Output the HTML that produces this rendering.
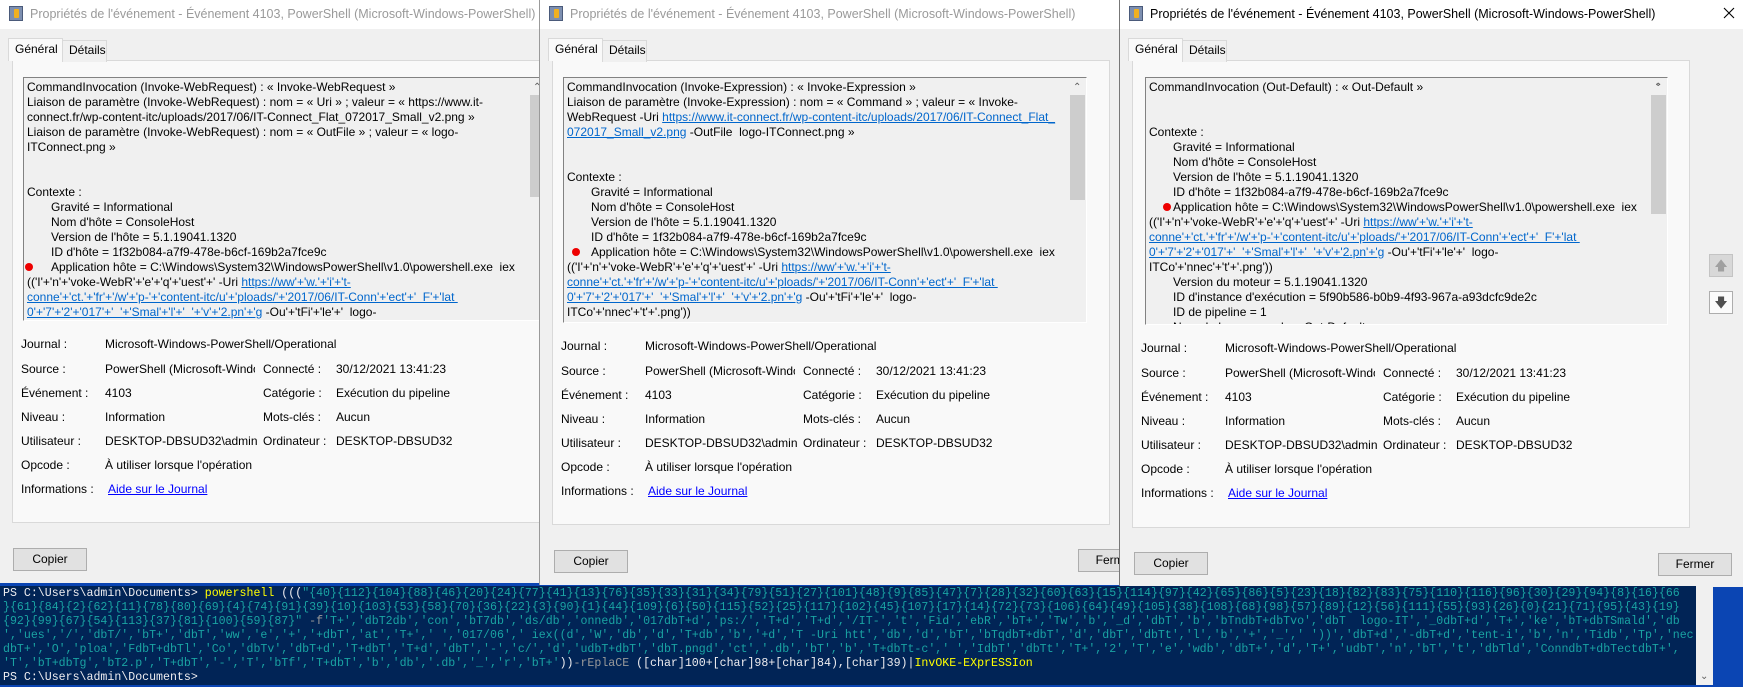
<!DOCTYPE html>
<html><head><meta charset="utf-8">
<style>
*{margin:0;padding:0;box-sizing:border-box}
body{width:1743px;height:687px;overflow:hidden;background:#0b45b3;font-family:"Liberation Sans",sans-serif;font-size:12px;color:#000;position:relative}
.win{position:absolute;top:0;width:624px;background:#f0f0f0;overflow:hidden;border-left:1px solid #9a9a9a}
.tb{position:absolute;left:0;top:0;right:0;height:29px;background:#fff}
.ic{position:absolute;left:9px;top:6px;width:14px;height:15px;background:#7d8fb0;border:1px solid #4a5a7a}
.ic:after{content:"";position:absolute;left:4px;top:2px;width:5px;height:9px;background:#f0b020;border-radius:1px}
.tt{position:absolute;left:30px;top:7px;font-size:12.5px;white-space:nowrap}
.inact .tt{color:#9a9a9a}
.cx{position:absolute;left:603px;top:7px}
.tab{position:absolute;height:22px;border:1px solid #d9d9d9;border-bottom:none;padding:3px 6px;white-space:nowrap}
.t1{left:8px;top:38px;width:55px;background:#f9f9f9;height:23px;z-index:2}
.t2{left:62px;top:40px;width:45px;background:#f0f0f0;padding-top:2px}
.panel{position:absolute;left:12px;top:60px;width:558px;background:#f9f9f9;border:1px solid #d9d9d9}
.box{position:absolute;left:23px;top:77px;width:524px;border:1px solid;border-color:#828282 #fff #fff #828282;background:#f0f0f0;overflow:hidden;padding-top:2px}
.box div{height:15px;line-height:15px;white-space:pre;padding-left:3px}
.box .in{padding-left:27px}
.lk{color:#0066cc;text-decoration:underline}
.dot{position:absolute;width:8px;height:8px;border-radius:50%;background:#e00}
.sb{position:absolute;right:0;top:0;bottom:0;width:17px;background:#f0f0f0}
.sb .th{position:absolute;left:1px;right:1px;top:17px;height:102px;background:#cdcdcd}
.sb .u{position:absolute;top:2px;left:4px;font-size:10px;color:#606060}
.sb .d{position:absolute;bottom:2px;left:4px;font-size:10px;color:#606060}
.f{position:absolute;white-space:nowrap;line-height:14px}
.btn{position:absolute;width:74px;height:23px;background:#e1e1e1;border:1px solid #adadad;text-align:center;line-height:21px}
.ab{position:absolute;left:589px;width:24px;height:23px;border:1px solid #c4c4c4;text-align:center;line-height:21px;font-size:13px}
#con{position:absolute;left:0;top:586px;width:1696px;height:99px;background:#012456;overflow:hidden;font-family:"Liberation Mono",monospace;font-size:11.6px;color:#eeedf0}
#con div{position:absolute;left:3px;white-space:pre;height:14px;line-height:14px}
.y{color:#ffff00}.s{color:#1aa3a3}.g{color:#9a9a9a}
#csb{position:absolute;left:1696px;top:586px;width:17px;height:99px;background:#f0f0f0}
</style></head><body>

<!-- Window 1 -->
<div class="win inact" style="left:0;height:583px;border-left:none">
<div class="tb"><div class="ic"></div><div class="tt">Propriétés de l'événement - Événement 4103, PowerShell (Microsoft-Windows-PowerShell)</div></div>
<div class="panel" style="height:463px"></div>
<div class="tab t1">Général</div><div class="tab t2">Détails</div>
<div class="box" style="height:244px">
<div>CommandInvocation (Invoke-WebRequest) : « Invoke-WebRequest »</div>
<div>Liaison de paramètre (Invoke-WebRequest) : nom = « Uri » ; valeur = « https://www.it-</div>
<div>connect.fr/wp-content-itc/uploads/2017/06/IT-Connect_Flat_072017_Small_v2.png »</div>
<div>Liaison de paramètre (Invoke-WebRequest) : nom = « OutFile » ; valeur = « logo-</div>
<div>ITConnect.png »</div>
<div> </div><div> </div>
<div>Contexte :</div>
<div class="in">Gravité = Informational</div>
<div class="in">Nom d'hôte = ConsoleHost</div>
<div class="in">Version de l'hôte = 5.1.19041.1320</div>
<div class="in">ID d'hôte = 1f32b084-a7f9-478e-b6cf-169b2a7fce9c</div>
<div class="in">Application hôte = C:\Windows\System32\WindowsPowerShell\v1.0\powershell.exe  iex</div>
<div>(('I'+'n'+'voke-WebR'+'e'+'q'+'uest'+' -Uri <span class="lk">https://ww'+'w.'+'i'+'t-</span></div>
<div><span class="lk">conne'+'ct.'+'fr'+'/w'+'p-'+'content-itc/u'+'ploads/'+'2017/06/IT-Conn'+'ect'+'  F'+'lat </span></div>
<div><span class="lk">0'+'7'+'2'+'017'+'  '+'Smal'+'l'+'  '+'v'+'2.pn'+'g</span> -Ou'+'tFi'+'le'+'  logo-</div>
<div class="sb"><span class="u">&#8963;</span><div class="th" style="top:17px;height:102px"></div></div>
</div>
<div class="dot" style="left:25px;top:263px"></div>
<div class="f" style="left:21px;top:337px">Journal :</div><div class="f" style="left:105px;top:337px">Microsoft-Windows-PowerShell/Operational</div>
<div class="f" style="left:21px;top:362px">Source :</div><div class="f" style="left:105px;top:362px;width:150px;overflow:hidden">PowerShell (Microsoft-Windows</div>
<div class="f" style="left:263px;top:362px">Connecté :</div><div class="f" style="left:336px;top:362px">30/12/2021 13:41:23</div>
<div class="f" style="left:21px;top:386px">Événement :</div><div class="f" style="left:105px;top:386px">4103</div>
<div class="f" style="left:263px;top:386px">Catégorie :</div><div class="f" style="left:336px;top:386px">Exécution du pipeline</div>
<div class="f" style="left:21px;top:410px">Niveau :</div><div class="f" style="left:105px;top:410px">Information</div>
<div class="f" style="left:263px;top:410px">Mots-clés :</div><div class="f" style="left:336px;top:410px">Aucun</div>
<div class="f" style="left:21px;top:434px">Utilisateur :</div><div class="f" style="left:105px;top:434px">DESKTOP-DBSUD32\admin</div>
<div class="f" style="left:263px;top:434px">Ordinateur :</div><div class="f" style="left:336px;top:434px">DESKTOP-DBSUD32</div>
<div class="f" style="left:21px;top:458px">Opcode :</div><div class="f" style="left:105px;top:458px">À utiliser lorsque l'opération</div>
<div class="f" style="left:21px;top:482px">Informations :</div><div class="f lk" style="left:108px;top:482px;color:#0000ff">Aide sur le Journal</div>
<div class="btn" style="left:13px;top:548px">Copier</div>
</div>

<!-- Window 2 -->
<div class="win inact" style="left:539px;height:585px">
<div class="tb"><div class="ic"></div><div class="tt">Propriétés de l'événement - Événement 4103, PowerShell (Microsoft-Windows-PowerShell)</div></div>
<div class="panel" style="height:465px"></div>
<div class="tab t1">Général</div><div class="tab t2">Détails</div>
<div class="box" style="height:246px">
<div>CommandInvocation (Invoke-Expression) : « Invoke-Expression »</div>
<div>Liaison de paramètre (Invoke-Expression) : nom = « Command » ; valeur = « Invoke-</div>
<div>WebRequest -Uri <span class="lk">https://www.it-connect.fr/wp-content-itc/uploads/2017/06/IT-Connect_Flat_</span></div>
<div><span class="lk">072017_Small_v2.png</span> -OutFile  logo-ITConnect.png »</div>
<div> </div><div> </div>
<div>Contexte :</div>
<div class="in">Gravité = Informational</div>
<div class="in">Nom d'hôte = ConsoleHost</div>
<div class="in">Version de l'hôte = 5.1.19041.1320</div>
<div class="in">ID d'hôte = 1f32b084-a7f9-478e-b6cf-169b2a7fce9c</div>
<div class="in">Application hôte = C:\Windows\System32\WindowsPowerShell\v1.0\powershell.exe  iex</div>
<div>(('I'+'n'+'voke-WebR'+'e'+'q'+'uest'+' -Uri <span class="lk">https://ww'+'w.'+'i'+'t-</span></div>
<div><span class="lk">conne'+'ct.'+'fr'+'/w'+'p-'+'content-itc/u'+'ploads/'+'2017/06/IT-Conn'+'ect'+'  F'+'lat </span></div>
<div><span class="lk">0'+'7'+'2'+'017'+'  '+'Smal'+'l'+'  '+'v'+'2.pn'+'g</span> -Ou'+'tFi'+'le'+'  logo-</div>
<div>ITCo'+'nnec'+'t'+'.png'))</div>
<div class="sb"><span class="u">&#8963;</span><div class="th" style="top:17px;height:105px"></div></div>
</div>
<div class="dot" style="left:32px;top:248px"></div>
<div class="f" style="left:21px;top:339px">Journal :</div><div class="f" style="left:105px;top:339px">Microsoft-Windows-PowerShell/Operational</div>
<div class="f" style="left:21px;top:364px">Source :</div><div class="f" style="left:105px;top:364px;width:150px;overflow:hidden">PowerShell (Microsoft-Windows</div>
<div class="f" style="left:263px;top:364px">Connecté :</div><div class="f" style="left:336px;top:364px">30/12/2021 13:41:23</div>
<div class="f" style="left:21px;top:388px">Événement :</div><div class="f" style="left:105px;top:388px">4103</div>
<div class="f" style="left:263px;top:388px">Catégorie :</div><div class="f" style="left:336px;top:388px">Exécution du pipeline</div>
<div class="f" style="left:21px;top:412px">Niveau :</div><div class="f" style="left:105px;top:412px">Information</div>
<div class="f" style="left:263px;top:412px">Mots-clés :</div><div class="f" style="left:336px;top:412px">Aucun</div>
<div class="f" style="left:21px;top:436px">Utilisateur :</div><div class="f" style="left:105px;top:436px">DESKTOP-DBSUD32\admin</div>
<div class="f" style="left:263px;top:436px">Ordinateur :</div><div class="f" style="left:336px;top:436px">DESKTOP-DBSUD32</div>
<div class="f" style="left:21px;top:460px">Opcode :</div><div class="f" style="left:105px;top:460px">À utiliser lorsque l'opération</div>
<div class="f" style="left:21px;top:484px">Informations :</div><div class="f lk" style="left:108px;top:484px;color:#0000ff">Aide sur le Journal</div>
<div class="btn" style="left:14px;top:550px">Copier</div>
<div class="btn" style="left:538px;top:549px">Fermer</div>
</div>

<!-- Window 3 -->
<div class="win" style="left:1119px;height:587px;border-left:1px solid #777">
<div class="tb"><div class="ic"></div><div class="tt">Propriétés de l'événement - Événement 4103, PowerShell (Microsoft-Windows-PowerShell)</div>
<svg class="cx" width="12" height="12" viewBox="0 0 12 12"><path d="M1 1L11 11M11 1L1 11" stroke="#000" stroke-width="1.1"/></svg></div>
<div class="panel" style="height:468px"></div>
<div class="tab t1">Général</div><div class="tab t2">Détails</div>
<div class="box" style="left:25px;height:248px;width:523px">
<div>CommandInvocation (Out-Default) : « Out-Default »</div>
<div> </div><div> </div>
<div>Contexte :</div>
<div class="in">Gravité = Informational</div>
<div class="in">Nom d'hôte = ConsoleHost</div>
<div class="in">Version de l'hôte = 5.1.19041.1320</div>
<div class="in">ID d'hôte = 1f32b084-a7f9-478e-b6cf-169b2a7fce9c</div>
<div class="in">Application hôte = C:\Windows\System32\WindowsPowerShell\v1.0\powershell.exe  iex</div>
<div>(('I'+'n'+'voke-WebR'+'e'+'q'+'uest'+' -Uri <span class="lk">https://ww'+'w.'+'i'+'t-</span></div>
<div><span class="lk">conne'+'ct.'+'fr'+'/w'+'p-'+'content-itc/u'+'ploads/'+'2017/06/IT-Conn'+'ect'+'  F'+'lat </span></div>
<div><span class="lk">0'+'7'+'2'+'017'+'  '+'Smal'+'l'+'  '+'v'+'2.pn'+'g</span> -Ou'+'tFi'+'le'+'  logo-</div>
<div>ITCo'+'nnec'+'t'+'.png'))</div>
<div class="in">Version du moteur = 5.1.19041.1320</div>
<div class="in">ID d'instance d'exécution = 5f90b586-b0b9-4f93-967a-a93dcfc9de2c</div>
<div class="in">ID de pipeline = 1</div>
<div class="in">Nom de la commande = Out-Default</div>
<div class="sb"><span class="u">&#8963;</span><div class="th" style="top:17px;height:119px"></div><span class="d">&#8964;</span></div>
</div>
<div class="dot" style="left:43px;top:203px"></div>
<div class="f" style="left:21px;top:341px">Journal :</div><div class="f" style="left:105px;top:341px">Microsoft-Windows-PowerShell/Operational</div>
<div class="f" style="left:21px;top:366px">Source :</div><div class="f" style="left:105px;top:366px;width:150px;overflow:hidden">PowerShell (Microsoft-Windows</div>
<div class="f" style="left:263px;top:366px">Connecté :</div><div class="f" style="left:336px;top:366px">30/12/2021 13:41:23</div>
<div class="f" style="left:21px;top:390px">Événement :</div><div class="f" style="left:105px;top:390px">4103</div>
<div class="f" style="left:263px;top:390px">Catégorie :</div><div class="f" style="left:336px;top:390px">Exécution du pipeline</div>
<div class="f" style="left:21px;top:414px">Niveau :</div><div class="f" style="left:105px;top:414px">Information</div>
<div class="f" style="left:263px;top:414px">Mots-clés :</div><div class="f" style="left:336px;top:414px">Aucun</div>
<div class="f" style="left:21px;top:438px">Utilisateur :</div><div class="f" style="left:105px;top:438px">DESKTOP-DBSUD32\admin</div>
<div class="f" style="left:263px;top:438px">Ordinateur :</div><div class="f" style="left:336px;top:438px">DESKTOP-DBSUD32</div>
<div class="f" style="left:21px;top:462px">Opcode :</div><div class="f" style="left:105px;top:462px">À utiliser lorsque l'opération</div>
<div class="f" style="left:21px;top:486px">Informations :</div><div class="f lk" style="left:108px;top:486px;color:#0000ff">Aide sur le Journal</div>
<div class="ab" style="top:254px;background:#d8d8d8;color:#a0a0a0">&#129093;</div>
<div class="ab" style="top:291px;background:#fbfbfb;border-color:#adadad;color:#505050">&#129095;</div>
<div class="btn" style="left:14px;top:552px">Copier</div>
<div class="btn" style="left:538px;top:553px">Fermer</div>
</div>

<div id="con">
<div style="top:1px">PS C:\Users\admin\Documents&gt; <span class="y">powershell</span> (((<span class="s">"{40}{112}{104}{88}{46}{20}{24}{77}{41}{13}{76}{35}{33}{31}{34}{79}{51}{27}{101}{48}{9}{85}{47}{7}{28}{32}{60}{63}{15}{114}{97}{42}{65}{86}{5}{23}{18}{82}{83}{75}{110}{116}{96}{30}{29}{94}{8}{16}{66</span></div>
<div style="top:15px" class="s">}{61}{84}{2}{62}{11}{78}{80}{69}{4}{74}{91}{39}{10}{103}{53}{58}{70}{36}{22}{3}{90}{1}{44}{109}{6}{50}{115}{52}{25}{117}{102}{45}{107}{17}{14}{72}{73}{106}{64}{49}{105}{38}{108}{68}{98}{57}{89}{12}{56}{111}{55}{93}{26}{0}{21}{71}{95}{43}{19}</div>
<div style="top:29px"><span class="s">{92}{99}{67}{54}{113}{37}{81}{100}{59}{87}"</span> <span class="g">-f</span><span class="s">'T+','dbT2db','con','bT7db','ds/db','onnedb','017dbT+d','ps:/','T+d','T+d','/IT-','t','Fid','ebR','bT+','Tw','b','_d','dbT','b','bTndbT+dbTvo','dbT  logo-IT','_0dbT+d','T+','ke','bT+dbTSmald','db</span></div>
<div style="top:43px" class="s">','ues','/','dbT/','bT+','dbT','ww','e','+','+dbT','at','T+',' ','017/06',' iex((d','W','db','d','T+db','b','+d','T -Uri htt','db','d','bT','bTqdbT+dbT','d','dbT','dbTt','l','b','+','_',' '))','dbT+d','-dbT+d','tent-i','b','n','Tidb','Tp','nec</div>
<div style="top:57px" class="s">dbT+','O','ploa','FdbT+dbTl','Co','dbTv','dbT+d','T+dbT','T+d','dbT','-','c/','d','udbT+dbT','dbT.pngd','ct','.db','bT','b','T+dbTt-c',' ','IdbT','dbTt','T+','2','T','e','wdb','dbT+','d','T+','udbT','n','bT','t','dbTld','ConndbT+dbTectdbT+',</div>
<div style="top:71px"><span class="s">'T','bT+dbTg','bT2.p','T+dbT','-','T','bTf','T+dbT','b','db','.db','_','r','bT+'</span>))<span class="g">-rEplaCE</span> ([char]100+[char]98+[char]84),[char]39)|<span class="y">InvOKE-EXprESSIon</span></div>
<div style="top:85px">PS C:\Users\admin\Documents&gt;</div>
</div>
<div id="csb"><span style="position:absolute;left:4px;bottom:3px;font-size:10px;color:#606060">&#8964;</span></div>
</body></html>
